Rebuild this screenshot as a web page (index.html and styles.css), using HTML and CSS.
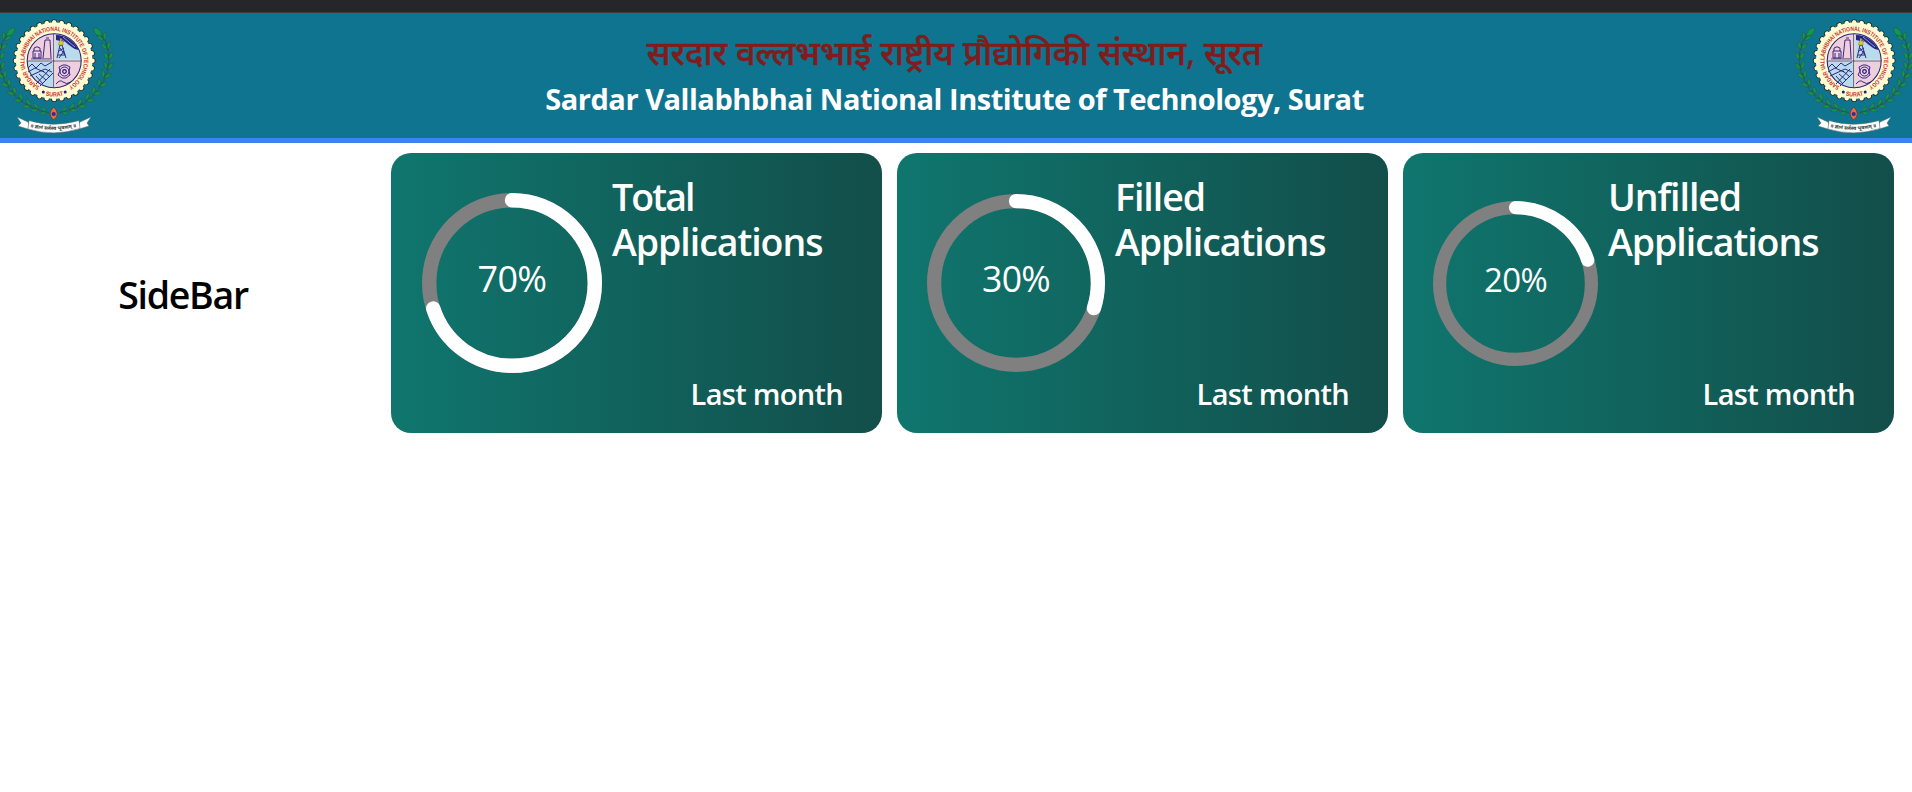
FILE: index.html
```
<!DOCTYPE html>
<html lang="en">
<head>
<meta charset="utf-8">
<title>SVNIT Dashboard</title>
<link rel="stylesheet" href="styles.css">
</head>
<body>
<svg class="defs" width="0" height="0" aria-hidden="true">
  <defs>
    <g id="leaf">
      <path d="M-3 0H5" stroke="#2c5140" stroke-width=".8"/>
      <path d="M-1-.3C-.5-4 3-5 6.500-5C5.500-2 3-.3-1-.3Z M-1 .3C-.5 4 3 5 6.500 5C5.500 2 3 .3-1 .3Z" fill="#10994d" stroke="#315540" stroke-width=".55"/>
    </g>
    <g id="branch">
      <path d="M59 113C91 108 111 82 109 55Q108 40 98 30" fill="none" stroke="#345443" stroke-width=".8"/>
      <use href="#leaf" transform="translate(63 111.500) rotate(-8) scale(.75)"/>
      <use href="#leaf" transform="translate(71 109) rotate(-20) scale(.85)"/>
      <use href="#leaf" transform="translate(79 105.500) rotate(-29) scale(.9)"/>
      <use href="#leaf" transform="translate(87 100) rotate(-38) scale(.9)"/>
      <use href="#leaf" transform="translate(94 93.500) rotate(-48) scale(.9)"/>
      <use href="#leaf" transform="translate(100 85.500) rotate(-58) scale(.9)"/>
      <use href="#leaf" transform="translate(104.500 77) rotate(-66) scale(.9)"/>
      <use href="#leaf" transform="translate(107.500 68) rotate(-78) scale(.9)"/>
      <use href="#leaf" transform="translate(108.500 58) rotate(-90) scale(.9)"/>
      <use href="#leaf" transform="translate(107 48) rotate(-104) scale(.9)"/>
      <use href="#leaf" transform="translate(103.500 39) rotate(-116) scale(.9)"/>
      <path d="M102 36C95 36 94 32 93.500 28C99 28 101 31 102 36Z" fill="#10994d" stroke="#315540" stroke-width=".5"/>
    </g>
    <path id="ring-top" d="M39.800 86.600A29.700 29.700 0 1 1 68.500 86.600"/>
    <path id="ring-bottom" d="M38.500 92.900A35.800 35.800 0 0 0 69.800 92.900"/>
    <symbol id="emblem" viewBox="-5 13 120 125">
      <use href="#branch"/>
      <use href="#branch" transform="translate(108.300 0) scale(-1 1)"/>
      <g fill="none" stroke-linecap="round">
        <circle cx="54.200" cy="60.700" r="38.300" pathLength="32" stroke="#26271f" stroke-width="6" stroke-dasharray=".01 .99"/>
        <circle cx="54.200" cy="60.700" r="38.300" pathLength="32" stroke="#fffbd2" stroke-width="4.500" stroke-dasharray=".01 .99"/>
      </g>
      <circle cx="54.200" cy="60.700" r="38.400" fill="#fffbd2"/>
      <circle cx="54.200" cy="60.700" r="27" fill="#efcedd"/>
      <path d="M54.200 60.700V33.700A27 27 0 0 1 81.200 60.700ZM54.200 60.700V87.700A27 27 0 0 1 27.200 60.700Z" fill="#b9dcec"/>
      <g fill="none" stroke="#201779" stroke-width=".9">
        <path d="M33 58V51H41V58ZM34 51V48Q37 45.500 40 48V51M43 58L45 40H50L51 58M46 38H49M35 53V58M39 53V58M31 59H52"/>
        <path d="M28 68L32 64L36 68L41 63L45 66L52 62M28 72L35 68L44 72M30 76L45 69L52 72M36 84L50 69M40 86L53 73M39 74L46 80M36 76L43 84M43 71L50 77"/>
        <path d="M57 58L60 45H62L66 58M58 55H65M59 51L64 48M60 48L65 55M59 58L64 51"/>
        <path d="M59 67L63 65H66L70 67L69 71L70 75L66 78H62L58 75L60 71Z"/>
        <circle cx="64.500" cy="71.500" r="4.500"/>
        <circle cx="64.500" cy="71.500" r="1.800" stroke-width="1.200"/>
        <path d="M56 84Q60 79 63 82T71 82"/>
      </g>
      <path d="M56 35Q70 35 79 50Q72 49 65 42L56 40Z" fill="#282289"/>
      <path d="M63 37L75 47M61 39L79 53M65 44L80 57" stroke="#b9dcec" stroke-width=".7" fill="none"/>
      <path d="M58.500 45L59.500 41H60V38.500H61.500V41H63V45Z" fill="#e8c919" stroke="#6c6b27" stroke-width=".4"/>
      <path d="M54.200 33.700V87.700M27.200 60.700H81.200" stroke="#fff3d5" stroke-width="2"/>
      <path d="M53.700 33.700V87.700M27.200 61H81.200" stroke="#302774" stroke-width=".8"/>
      <circle cx="54.200" cy="60.700" r="27" fill="none" stroke="#302774" stroke-width="1.100"/>
      <text class="seal-text"><textPath href="#ring-top" textLength="156" lengthAdjust="spacingAndGlyphs">SARDAR VALLABHBHAI NATIONAL INSTITUTE OF TECHNOLOGY</textPath></text>
      <text class="seal-text"><textPath href="#ring-bottom" startOffset="7.500" textLength="18" lengthAdjust="spacingAndGlyphs">SURAT</textPath></text>
      <circle cx="43.300" cy="92" r="1.500" fill="#25207d"/>
      <circle cx="65.200" cy="92" r="1.500" fill="#25207d"/>
      <path d="M53.700 107Q61 114 53.700 120Q46.500 114 53.700 107Z" fill="#e86d3d" stroke="#573b2b" stroke-width=".7"/>
      <circle cx="53.700" cy="114" r="2" fill="#32279b"/>
      <path d="M28 122L17 117L21 123L18 126L31 130ZM80 122L91 117L87 123L89 126L76 130Z" fill="#fff" stroke="#53686b" stroke-width=".5"/>
      <path d="M29 120.500Q53 128 79 120.500L80 128.500Q54 137 28 129Z" fill="#fff" stroke="#53686b" stroke-width=".6"/>
      <path id="motto" d="M30 127Q54 133 78 126.500" fill="none"/>
      <text class="motto-text"><textPath href="#motto" textLength="47" lengthAdjust="spacingAndGlyphs">॥ ज्ञानं सर्वस्य भूषणम् ॥</textPath></text>
    </symbol>
  </defs>
</svg>
<div class="topbar"></div>
<header class="header">
  <svg class="emblem" role="img" aria-label="Institute emblem"><use href="#emblem"/></svg>
  <div class="titles">
    <div class="title-hi" lang="hi">सरदार वल्लभभाई राष्ट्रीय प्रौद्योगिकी संस्थान, सूरत</div>
    <div class="title-en">Sardar Vallabhbhai National Institute of Technology, Surat</div>
  </div>
  <svg class="emblem" role="img" aria-label="Institute emblem"><use href="#emblem"/></svg>
</header>
<main class="layout">
  <aside class="sidebar">SideBar</aside>
  <section class="cards">
    <article class="card">
      <svg class="ring ring-total" viewBox="0 0 100 100">
        <circle class="track" cx="50" cy="50" r="46"/>
        <circle class="progress" cx="50" cy="50" r="46" pathLength="100" stroke-dasharray="70 100"/>
        <text class="percent" x="50" y="55">70%</text>
      </svg>
      <h2 class="label"><span class="word-total">Total</span><br>Applications</h2>
      <p class="period">Last month</p>
    </article>
    <article class="card">
      <svg class="ring ring-filled" viewBox="0 0 100 100">
        <circle class="track" cx="50" cy="50" r="46"/>
        <circle class="progress" cx="50" cy="50" r="46" pathLength="100" stroke-dasharray="30 100"/>
        <text class="percent" x="50" y="55">30%</text>
      </svg>
      <h2 class="label">Filled<br>Applications</h2>
      <p class="period">Last month</p>
    </article>
    <article class="card">
      <svg class="ring ring-unfilled" viewBox="0 0 100 100">
        <circle class="track" cx="50" cy="50" r="46"/>
        <circle class="progress" cx="50" cy="50" r="46" pathLength="100" stroke-dasharray="20 100"/>
        <text class="percent" x="50" y="55">20%</text>
      </svg>
      <h2 class="label">Unfilled<br>Applications</h2>
      <p class="period">Last month</p>
    </article>
  </section>
</main>
</body>
</html>
```
FILE: styles.css
```
* { box-sizing: border-box; }
body {
  margin: 0;
  background: #fff;
  font-family: "Open Sans", "Noto Sans", sans-serif;
  overflow: hidden;
}
.defs { display: block; }
.topbar { height: 13px; background: #25252a; border-bottom: 1px solid #3a3c40; }
.header {
  height: 130px;
  margin: 0 -3px 0 -5px;
  background: #0e7490;
  border-bottom: 5px solid #3b82f6;
  display: flex;
  justify-content: space-between;
}
.emblem { width: 120px; height: 125px; flex: none; }
.seal-text { font: 700 6.200px "Liberation Sans", sans-serif; fill: #c73535; }
.motto-text { font: 700 5px "Noto Sans", sans-serif; fill: #333; }
.titles { text-align: center; white-space: nowrap; padding: 15px 1px 0 0; }
.title-hi { color: #7f1d1d; font-size: 34.300px; font-weight: 500; line-height: 48px; -webkit-text-stroke: .5px #7f1d1d; }
.title-en { color: #fff; font-size: 29px; font-weight: 700; line-height: 46px; letter-spacing: -.47px; }
.layout { display: flex; padding: 10px 18px 0 0; }
.sidebar {
  width: 391px;
  padding: 122px 25px 0 0;
  text-align: center;
  color: #000;
  font-size: 37.500px;
  font-weight: 600;
  line-height: 40px;
  letter-spacing: -1.300px;
}
.cards { flex: 1; display: grid; grid-template-columns: repeat(3, 491px); gap: 15px; }
.card {
  height: 280px;
  padding: 21px 39px 17px 30px;
  border-radius: 20px;
  background: linear-gradient(to right, #0f766e, #134e4a);
  color: #fff;
  display: grid;
  grid-template-columns: auto 1fr;
  grid-template-rows: 1fr 45px;
}
.ring { grid-row: 1 / 3; align-self: center; margin: 0 10px 24px 0; }
.ring-total { width: 180px; height: 180px; margin-left: 1px; }
.ring-filled { width: 178px; height: 178px; }
.ring-unfilled { width: 165px; height: 165px; }
.track, .progress { fill: none; stroke-width: 8; }
.track { stroke: #808080; }
.progress { stroke: #fff; stroke-linecap: round; transform: rotate(-90deg); transform-origin: center; }
.percent { fill: #fff; font-size: 20px; text-anchor: middle; letter-spacing: -.4px; }
.label { margin: 0; font-size: 37.500px; font-weight: 600; line-height: 45px; white-space: nowrap; letter-spacing: -1.050px; }
.word-total { letter-spacing: -1.900px; }
.period { margin: 0; grid-column: 2; text-align: right; font-size: 29px; font-weight: 600; line-height: 45px; letter-spacing: -.700px; }
```
